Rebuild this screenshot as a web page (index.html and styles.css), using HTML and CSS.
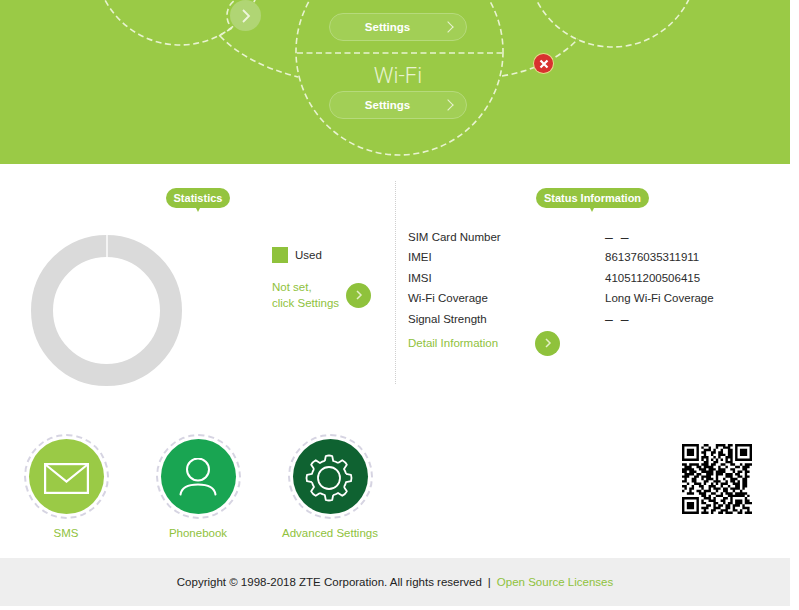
FILE: index.html
```html
<!DOCTYPE html>
<html lang="en">
<head>
    <meta charset="UTF-8">
    <title>ZTE Mobile Hotspot</title>
    <link rel="stylesheet" href="styles.css">
</head>
<body>
    <section class="hero">
        <svg class="heroLines" width="790" height="164" viewBox="0 0 790 164">
            <g fill="none" stroke="#e8f3d0" stroke-width="1.6" stroke-dasharray="6 3.5">
                <circle cx="180" cy="-40" r="85"/>
                <circle cx="612.5" cy="-38" r="85"/>
                <circle cx="399.5" cy="51.5" r="103.5"/>
                <line x1="297" y1="53" x2="502" y2="53"/>
                <path d="M220 36 Q247 64 298 77"/>
                <path d="M502 76 Q550 68 578 39"/>
                <path d="M219 36 L232 28"/>
                <path d="M229 24 A19 19 0 0 1 235 0"/>
            </g>
        </svg>
        <span class="heroArrow"><svg width="22" height="22" viewBox="0 0 22 22"><path d="M8 5l6 6-6 6" fill="none" stroke="#eef6dc" stroke-width="1.8"/></svg></span>
        <span class="heroClose"><svg width="18" height="18" viewBox="0 0 18 18"><path d="M5.5 5.5l7 7M12.5 5.5l-7 7" stroke="#fff" stroke-width="2.2"/></svg></span>
        <div class="heroCentre">
            <a class="pill">Settings</a>
            <div class="heroTitle">Wi-Fi</div>
            <a class="pill">Settings</a>
        </div>
    </section>

    <section class="info">
        <div class="statistics">
            <div class="tagRow"><span class="tag">Statistics</span></div>
            <div class="statsBody">
                <div class="ring"></div>
                <div class="legend">
                    <div class="legendRow"><span class="swatch"></span>Used</div>
                    <div class="notSet">
                        <a class="greenLink">Not set,<br>click Settings</a>
                        <span class="goBtn"><svg width="14" height="14" viewBox="0 0 14 14"><path d="M5 3l4 4-4 4" fill="none" stroke="#e4f0c8" stroke-width="1.5"/></svg></span>
                    </div>
                </div>
            </div>
        </div>
        <div class="status">
            <div class="tagRow"><span class="tag">Status Information</span></div>
            <dl class="statusList">
                <div class="statusRow"><dt>SIM Card Number</dt><dd class="empty">– –</dd></div>
                <div class="statusRow"><dt>IMEI</dt><dd>861376035311911</dd></div>
                <div class="statusRow"><dt>IMSI</dt><dd>410511200506415</dd></div>
                <div class="statusRow"><dt>Wi-Fi Coverage</dt><dd>Long Wi-Fi Coverage</dd></div>
                <div class="statusRow"><dt>Signal Strength</dt><dd class="empty">– –</dd></div>
            </dl>
            <div class="detailRow">
                <a class="greenLink detailLink">Detail Information</a>
                <span class="goBtn"><svg width="14" height="14" viewBox="0 0 14 14"><path d="M5 3l4 4-4 4" fill="none" stroke="#e4f0c8" stroke-width="1.5"/></svg></span>
            </div>
        </div>
    </section>

    <section class="shortcuts">
        <a class="shortcut sms">
            <span class="badge"><span class="badgeFill">
                <svg class="mailIcon" width="45" height="31" viewBox="0 0 45 31"><g fill="none" stroke="#fff" stroke-width="2.2"><rect x="1.1" y="1.1" width="42.8" height="28.8"/><path d="M2 2l20.5 16.500L43 2"/></g></svg>
            </span></span>
            SMS
        </a>
        <a class="shortcut phonebook">
            <span class="badge"><span class="badgeFill">
                <svg width="38" height="38" viewBox="0 0 38 38"><g fill="none" stroke="#fff" stroke-width="2" stroke-linecap="round"><circle cx="19" cy="11.5" r="11"/><path d="M1.5 36.5C2.5 30 9 26.5 19 26.5S35.5 30 36.500 36.5"/></g></svg>
            </span></span>
            Phonebook
        </a>
        <a class="shortcut advanced">
            <span class="badge"><span class="badgeFill">
                <svg class="gearIcon" width="48" height="48" viewBox="-24 -24 48 48">
                    <defs><path id="tooth" d="M-4.2 -17L-3.2 -22Q0 -23 3.2 -22L4.2 -17A17.5 17.5 0 0 1 9.05 -15"/></defs>
                    <g fill="none" stroke="#fff" stroke-width="1.8" stroke-linejoin="round">
                        <circle r="11"/>
                        <use href="#tooth"/>
                        <use href="#tooth" transform="rotate(45)"/>
                        <use href="#tooth" transform="rotate(90)"/>
                        <use href="#tooth" transform="rotate(135)"/>
                        <use href="#tooth" transform="rotate(180)"/>
                        <use href="#tooth" transform="rotate(225)"/>
                        <use href="#tooth" transform="rotate(270)"/>
                        <use href="#tooth" transform="rotate(315)"/>
                    </g>
                </svg>
            </span></span>
            Advanced Settings
        </a>
        <svg class="qr" width="70" height="70" viewBox="0 0 29 29">
            <path fill="#000" fill-rule="evenodd" d="M0 0h7v7H0zM1 1v5h5V1zM2 2h3v3H2zM22 0h7v7h-7zM23 1v5h5V1zM24 2h3v3h-3zM0 22h7v7H0zM1 23v5h5v-5zM2 24h3v3H2z"/>
            <path fill="none" stroke="#000" d="M9 .5h2m3 0h4m1 0h2
                M8 1.5h1m2 0h1m2 0h1m2 0h3
                M9 2.5h3m1 0h1m2 0h1m2 0h2
                M8 3.5h2m2 0h2m1 0h2m2 0h2
                M9 4.5h1m2 0h1m2 0h3m1 0h2
                M8 5.5h3m2 0h1m1 0h1m2 0h3
                M8 6.5h1m1 0h1m1 0h1m1 0h1m1 0h1m1 0h1m1 0h1
                M9 7.5h2m2 0h2m3 0h3
                M0 8.5h2m1 0h4m1 0h3m1 0h2m2 0h2m2 0h2m2 0h1m1 0h3
                M1 9.5h3m2 0h2m1 0h4m2 0h1m2 0h1m3 0h2m1 0h3
                M0 10.5h5m2 0h3m1 0h3m1 0h3m2 0h2m3 0h2
                M0 11.5h2m1 0h3m2 0h5m1 0h4m3 0h1m1 0h2m1 0h2
                M1 12.5h4m1 0h2m2 0h3m1 0h3m1 0h3m1 0h2m2 0h1
                M0 13.5h3m2 0h2m1 0h4m2 0h1m3 0h3m2 0h2m1 0h2
                M1 14.5h1m2 0h2m2 0h1m1 0h3m1 0h1m2 0h1m2 0h3m2 0h2
                M0 15.5h2m2 0h2m3 0h2m2 0h3m2 0h1m1 0h2m1 0h1m1 0h2
                M2 16.5h1m2 0h3m1 0h1m2 0h1m1 0h1m1 0h3m2 0h3m1 0h2
                M0 17.5h2m2 0h1m2 0h2m2 0h3m2 0h1m2 0h1m2 0h2m1 0h2
                M1 18.5h1m1 0h2m3 0h1m2 0h1m1 0h3m1 0h2m1 0h4m1 0h1
                M0 19.5h1m2 0h1m2 0h2m1 0h3m2 0h1m2 0h2m2 0h1m2 0h1
                M2 20.5h3m2 0h3m2 0h2m2 0h1m1 0h3m1 0h5
                M8 21.5h2m1 0h1m2 0h3m2 0h7m1 0h1m1 0h1
                M9 22.5h3m1 0h1m3 0h2m1 0h1m5 0h1
                M8 23.5h1m2 0h3m2 0h2m2 0h1m1 0h3m1 0h2
                M8 24.5h2m3 0h2m2 0h1m1 0h2m1 0h3m1 0h3
                M10 25.5h2m1 0h1m1 0h2m1 0h2m1 0h3m1 0h1
                M8 26.5h3m2 0h3m2 0h2m1 0h1m3 0h3
                M9 27.5h1m2 0h2m2 0h3m2 0h2m1 0h1m2 0h1
                M8 28.5h3m1 0h1m2 0h2m1 0h3m2 0h2m1 0h3"/>
        </svg>
    </section>

    <footer class="footer">
        <span>Copyright © 1998-2018 ZTE Corporation. All rights reserved</span>
        <span class="footSep">|</span>
        <a class="greenLink">Open Source Licenses</a>
    </footer>
</body>
</html>
```

FILE: styles.css
```css
* {
    box-sizing: border-box;
}

body {
    margin: 0;
    width: 790px;
    height: 610px;
    background-color: #fff;
    color: #2b2b2b;
    font-family: "Liberation Sans", Arial, sans-serif;
    font-size: 11.5px;
    overflow: hidden;
}

.greenLink {
    color: #8fc23c;
}

/* top green band */
.hero {
    position: relative;
    height: 164px;
    background-color: #9aca46;
    overflow: hidden;
}
.heroLines {
    position: absolute;
    left: 0;
    top: 0;
}
.heroCentre {
    position: relative;
    width: 138px;
    margin-left: 329px;
    padding-top: 13px;
    display: flex;
    flex-direction: column;
    align-items: center;
}
.heroTitle {
    margin-top: 21px;
    margin-bottom: 2px;
    height: 27px;
    line-height: 27px;
    color: #e8f3d0;
    font-family: Roboto, "Liberation Sans", sans-serif;
    font-size: 22px;
    font-weight: 300;
}
.pill {
    position: relative;
    width: 138px;
    height: 28px;
    line-height: 26px;
    padding-right: 21px;
    text-align: center;
    color: #fff;
    font-size: 11.5px;
    font-weight: bold;
    border: 1px solid #b6da7c;
    border-radius: 14px;
    background-color: #a2cf56;
}
.pill::after {
    content: "";
    position: absolute;
    right: 14px;
    top: 9px;
    width: 7px;
    height: 7px;
    border-top: 1.5px solid #e8f3d2;
    border-right: 1.5px solid #e8f3d2;
    transform: rotate(45deg);
}
.heroArrow {
    position: absolute;
    left: 230px;
    top: 0;
    width: 31px;
    height: 31px;
    border-radius: 50%;
    background-color: #b0d574;
    display: flex;
    align-items: center;
    justify-content: center;
}
.heroClose {
    position: absolute;
    left: 534px;
    top: 54px;
    width: 19px;
    height: 19px;
    border-radius: 50%;
    background-color: #d8322f;
    box-shadow: 0 0 0 1px #e9d98c;
    display: flex;
    align-items: center;
    justify-content: center;
}

/* statistics and status */
.info {
    display: flex;
    height: 222px;
    padding-top: 17px;
}
.statistics {
    width: 396px;
    height: 203px;
    padding-top: 7px;
    border-right: 1px dotted #cfcfcf;
}
.status {
    flex: 1;
    padding-top: 7px;
    padding-left: 12px;
}
.tagRow {
    display: flex;
    justify-content: center;
}
.tag {
    position: relative;
    height: 20px;
    line-height: 20px;
    padding: 0 8px;
    color: #fff;
    font-size: 11px;
    font-weight: bold;
    border-radius: 10px;
    background-color: #94c43f;
}
.tag::after {
    content: "";
    position: absolute;
    left: 50%;
    bottom: -4px;
    margin-left: -2px;
    border-left: 2px solid transparent;
    border-right: 2px solid transparent;
    border-top: 4px solid #94c43f;
}
.statistics .tagRow {
    width: 396px;
}
.status .tagRow {
    width: 369px;
}
.statsBody {
    display: flex;
    padding: 27px 0 0 31px;
}
.ring {
    position: relative;
    width: 151px;
    height: 151px;
    border: 22px solid #dadada;
    border-radius: 50%;
    background-color: #fff;
}
.ring::before {
    content: "";
    position: absolute;
    left: 52.5px;
    top: -22px;
    width: 2px;
    height: 22px;
    background-color: #f4f4f4;
}
.legend {
    margin-left: 90px;
    padding-top: 12px;
}
.legendRow {
    display: flex;
    align-items: center;
    height: 16px;
}
.swatch {
    width: 16px;
    height: 16px;
    margin-right: 7px;
    background-color: #8fc23c;
}
.notSet {
    display: flex;
    align-items: center;
    margin-top: 16px;
    line-height: 16px;
}
.notSet .goBtn {
    margin-left: 7px;
}
.goBtn {
    width: 25px;
    height: 25px;
    border-radius: 50%;
    background-color: #8fc23c;
    display: flex;
    align-items: center;
    justify-content: center;
    flex-shrink: 0;
}
.statusList {
    margin: 19px 0 0;
}
.statusRow {
    display: flex;
    height: 20.4px;
    line-height: 20.4px;
}
.statusRow dt {
    width: 197px;
}
.statusRow dd {
    margin: 0;
}
.statusRow .empty {
    font-size: 14px;
    word-spacing: 4px;
}
.detailRow {
    display: flex;
    align-items: center;
    margin-top: 2px;
}
.detailLink {
    width: 127px;
}

/* shortcut badges */
.shortcuts {
    position: relative;
    display: flex;
    height: 172px;
    padding-top: 48px;
}
.shortcut {
    display: flex;
    flex-direction: column;
    align-items: center;
    width: 132px;
    color: #8fc23c;
}
.badge {
    width: 85px;
    height: 85px;
    margin-bottom: 8px;
    padding: 3px;
    border: 2px dashed #d6d4e2;
    border-radius: 50%;
}
.badgeFill {
    width: 100%;
    height: 100%;
    border-radius: 50%;
    display: flex;
    align-items: center;
    justify-content: center;
}
.mailIcon {
    margin-top: 3px;
}
.gearIcon {
    margin: 2px 3px 0 0;
}
.sms .badgeFill {
    background-color: #9aca46;
}
.phonebook .badgeFill {
    background-color: #19a552;
}
.advanced .badgeFill {
    background-color: #0f6231;
}
.qr {
    position: absolute;
    left: 682px;
    top: 58px;
}

.footer {
    height: 48px;
    display: flex;
    align-items: center;
    justify-content: center;
    background-color: #eeeeee;
    color: #222;
}
.footSep {
    margin: 0 6px;
}
```
